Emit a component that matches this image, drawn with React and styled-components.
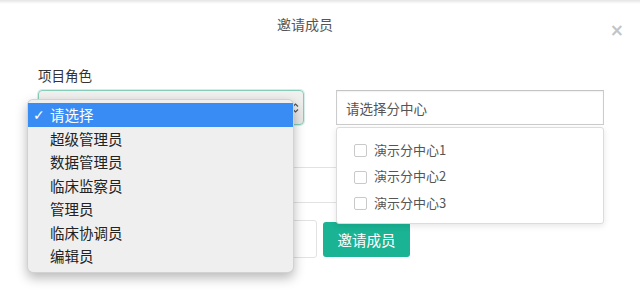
import React from "react";
import styled, { createGlobalStyle } from "styled-components";

const Global = createGlobalStyle`
  html, body { margin: 0; padding: 0; background: #fff; }
  body { font-family: "Helvetica Neue", "Liberation Sans", "Noto Sans CJK SC", sans-serif; }
  * { box-sizing: border-box; }
`;

const Modal = styled.div`
  position: relative;
  width: 640px;
  height: 302px;
  overflow: hidden;
  background: linear-gradient(#e4e4e4 0px, #f2f2f2 2px, #fff 4px);
`;

const Header = styled.div`
  display: grid;
  grid-template-columns: 1fr auto 1fr;
  align-items: center;
  height: 48px;
  padding: 0 16px;
`;

const Title = styled.div`
  grid-column: 2;
  font-size: 14px;
  color: #555;
  font-family: "Noto Sans CJK SC", sans-serif;
  margin-right: 30px;
`;

const Close = styled.div`
  grid-column: 3;
  justify-self: end;
  margin-top: 12px;
  font-size: 17px;
  line-height: 1;
  color: #c4c4c4;
  font-weight: bold;
  font-family: "DejaVu Sans", sans-serif;
`;

const Body = styled.div`
  padding: 17px 36px 0 38px;
  display: flex;
  flex-direction: column;
`;

const Row = styled.div`
  display: grid;
  grid-template-columns: 266px 268px;
  column-gap: 32px;
  align-items: end;
`;

const Field = styled.div`
  position: relative;
  display: flex;
  flex-direction: column;
`;

const Label = styled.div`
  font-size: 13.5px;
  line-height: 20px;
  color: #333;
  margin-bottom: 5px;
  font-family: "Noto Sans CJK SC", sans-serif;
`;

const SelectBox = styled.div`
  height: 35px;
  border: 1px solid #86cdb9;
  border-radius: 4px;
  background: linear-gradient(#f1f1ef, #e6e6e4);
  box-shadow: 0 0 0 1px rgba(134, 205, 185, 0.35);
  display: flex;
  align-items: center;
  justify-content: flex-end;
  padding-right: 4px;
`;

const Arrows = styled.svg`
  width: 7px;
  height: 12px;
`;

const TextInput = styled.div`
  height: 35px;
  border: 1px solid #ccc;
  border-top-color: #c4c4c4;
  background: #fff;
  box-shadow: inset 0 1px 2px rgba(0, 0, 0, 0.06);
  display: flex;
  align-items: center;
  padding-left: 9px;
  font-size: 13.5px;
  color: #555;
  font-family: "Noto Sans CJK SC", sans-serif;
`;

const NativeList = styled.div`
  position: absolute;
  left: -11px;
  top: 34px;
  width: 267px;
  padding: 3px 0 4px;
  background: #efefef;
  border: 1px solid rgba(0, 0, 0, 0.12);
  border-radius: 6px;
  box-shadow: 0 5px 12px rgba(0, 0, 0, 0.28);
  z-index: 5;
`;

const NativeOption = styled.div`
  height: 23.5px;
  display: flex;
  align-items: center;
  padding-left: ${(p) => (p.$selected ? "5px" : "22px")};
  background: ${(p) => (p.$selected ? "#3a8cf5" : "transparent")};
  color: ${(p) => (p.$selected ? "#fff" : "#222")};
  font-size: 14.5px;
  font-family: "Noto Sans CJK SC", sans-serif;
`;

const Check = styled.span`
  width: 17px;
  font-size: 14px;
  font-family: "DejaVu Sans", sans-serif;
  font-weight: bold;
`;

const Panel = styled.div`
  position: absolute;
  left: 0;
  right: 0;
  top: 37px;
  height: 97px;
  padding: 8px 0 0 17px;
  background: #fff;
  border: 1px solid #dcdcdc;
  border-radius: 3px;
  box-shadow: 0 2px 6px rgba(0, 0, 0, 0.1);
  z-index: 4;
`;

const PanelItem = styled.label`
  height: 26.5px;
  display: flex;
  align-items: center;
  gap: 7px;
  font-size: 13px;
  color: #555;
  font-family: "Noto Sans CJK SC", sans-serif;
`;

const Box = styled.span`
  width: 13px;
  height: 13px;
  border: 1px solid #c9c9c9;
  border-radius: 2px;
  background: #fff;
  margin-top: 3px;
`;

const Line = styled.div`
  margin-top: 42px;
  height: 36px;
  width: 562px;
  border-top: 1px solid #e2e2e2;
  border-bottom: 1px solid #e2e2e2;
`;

const BottomRow = styled.div`
  margin-top: 17px;
  display: flex;
  align-items: center;
  gap: 6px;
`;

const PlainInput = styled.div`
  width: 279px;
  height: 38px;
  border: 1px solid #e2e2e2;
  border-radius: 3px;
`;

const Button = styled.button`
  width: 87px;
  height: 35px;
  border: none;
  border-radius: 3px;
  background: #1ab394;
  color: #fff;
  font-size: 14.5px;
  font-family: "Noto Sans CJK SC", sans-serif;
  padding: 0;
  margin-top: 1px;
`;

const roles = ["超级管理员", "数据管理员", "临床监察员", "管理员", "临床协调员", "编辑员"];
const centers = ["演示分中心1", "演示分中心2", "演示分中心3"];

export default function App() {
  return (
    <>
      <Global />
      <Modal>
        <Header>
          <Title>邀请成员</Title>
          <Close>×</Close>
        </Header>
        <Body>
          <Row>
            <Field>
              <Label>项目角色</Label>
              <SelectBox>
                <Arrows viewBox="0 0 7 12">
                  <path d="M1 4.5 L3.5 2 L6 4.5 M1 7.5 L3.5 10 L6 7.5" fill="none" stroke="#555" strokeWidth="1.2" />
                </Arrows>
              </SelectBox>
              <NativeList>
                <NativeOption $selected>
                  <Check>✓</Check>请选择
                </NativeOption>
                {roles.map((r) => (
                  <NativeOption key={r}>{r}</NativeOption>
                ))}
              </NativeList>
            </Field>
            <Field>
              <TextInput>请选择分中心</TextInput>
              <Panel>
                {centers.map((c) => (
                  <PanelItem key={c}>
                    <Box />
                    {c}
                  </PanelItem>
                ))}
              </Panel>
            </Field>
          </Row>
          <Line />
          <BottomRow>
            <PlainInput />
            <Button>邀请成员</Button>
          </BottomRow>
        </Body>
      </Modal>
    </>
  );
}
